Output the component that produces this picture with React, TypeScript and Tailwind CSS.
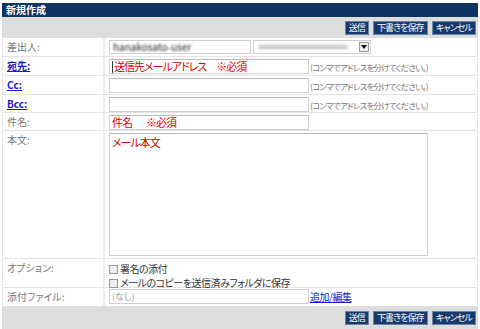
import React from "react";

const font = {
  fontFamily: '"Noto Sans CJK JP", "Noto Sans", sans-serif',
};

function Btn({ children }: { children: React.ReactNode }) {
  return (
    <button
      type="button"
      className="flex h-[14px] items-center border border-[#6d84a6] bg-[#163a6b] px-[3px] text-[9px] leading-none tracking-[-0.9px] text-white"
    >
      {children}
    </button>
  );
}

function Toolbar({ h }: { h: string }) {
  return (
    <div className={`flex items-center justify-end gap-[4px] bg-[#dddddd] pr-[2px] ${h}`}>
      <Btn>送信</Btn>
      <Btn>下書きを保存</Btn>
      <Btn>キャンセル</Btn>
    </div>
  );
}

function Row({
  label,
  link,
  h,
  children,
}: {
  label: string;
  link?: boolean;
  h: string;
  children?: React.ReactNode;
}) {
  return (
    <div className={`flex border-b border-[#e4e4e4] ${h}`}>
      <div className="w-[102px] shrink-0 border-r-2 border-[#ececec] pl-[4px] pt-[3px] text-[10px] leading-[12px]">
        {link ? (
          <a href="#" className="font-bold text-[#1a1acc] underline">
            {label}
          </a>
        ) : (
          <span className="text-[#777]">{label}</span>
        )}
      </div>
      <div className="flex min-w-0 flex-1 items-start pl-[4px] pt-[2px]">{children}</div>
    </div>
  );
}

function Note() {
  return (
    <span className="ml-[1px] pt-[2px] text-[8.5px] leading-[12px] tracking-[-0.8px] text-[#777]">
      (コンマでアドレスを分けてください。)
    </span>
  );
}

function Field({ children }: { children?: React.ReactNode }) {
  return (
    <div className="flex h-[15px] w-[200px] items-center border border-[#cfcfcf] border-t-[#b8b8b8] bg-white px-[2px] text-[11px] leading-none tracking-[-1px] text-[#dd0000]">
      {children}
    </div>
  );
}

export default function App() {
  return (
    <div
      className="h-[329px] w-[480px] overflow-hidden bg-white px-[2px] pt-[3px] [font-feature-settings:'palt']"
      style={font}
    >
      <div className="flex h-[14px] items-center bg-[#0e3562] pl-[4px] text-[10px] font-bold leading-none text-white">
        新規作成
      </div>
      <Toolbar h="h-[21px]" />
      <div className="border-x border-[#e4e4e4]">
        <Row label="差出人:" h="h-[19px]">
          <div className="flex h-[14px] w-[142px] items-center border border-[#cfcfcf] bg-white px-[3px]">
            <span className="text-[10px] leading-none text-[#222] blur-[0.8px]">hanakosato-user</span>
          </div>
          <div className="ml-[2px] flex h-[14px] w-[118px] items-center justify-between border border-[#cfcfcf] bg-white pl-[4px] pr-[1px]">
            <span className="h-[4px] w-[90px] rounded bg-[#c4c4c4] blur-[1.5px]" />
            <span className="flex h-[10px] w-[10px] items-center justify-center border border-[#999] bg-[#eee]">
              <svg width="6" height="4" viewBox="0 0 6 4">
                <path d="M0 0h6L3 4z" fill="#111" />
              </svg>
            </span>
          </div>
        </Row>
        <Row label="宛先:" link h="h-[19px]">
          <Field>
            <span className="mr-[1px] h-[12px] w-px bg-[#333]" />
            送信先メールアドレス
            <span className="w-[10px]" />
            ※必須
          </Field>
          <Note />
        </Row>
        <Row label="Cc:" link h="h-[19px]">
          <Field />
          <Note />
        </Row>
        <Row label="Bcc:" link h="h-[18px]">
          <Field />
          <Note />
        </Row>
        <Row label="件名:" h="h-[18px]">
          <Field>
            件名
            <span className="w-[14px]" />
            ※必須
          </Field>
        </Row>
        <Row label="本文:" h="h-[128px]">
          <div className="h-[123px] w-[319px] border border-[#cfcfcf] border-t-[#b8b8b8] bg-white px-[2px] pt-[3px] text-[11px] leading-none tracking-[-1px] text-[#dd0000]">
            メール本文
          </div>
        </Row>
        <Row label="オプション:" h="h-[29px]">
          <div className="flex flex-col gap-[2px] pt-[2px] text-[10px] leading-[12px] tracking-[-0.5px] text-[#333]">
            <label className="flex items-center gap-[2px]">
              <span className="h-[9px] w-[9px] border border-[#999] bg-[#eee]" />
              署名の添付
            </label>
            <label className="flex items-center gap-[2px]">
              <span className="h-[9px] w-[9px] border border-[#999] bg-[#eee]" />
              メールのコピーを送信済みフォルダに保存
            </label>
          </div>
        </Row>
        <div className="flex h-[18px]">
          <div className="w-[102px] shrink-0 border-r-2 border-[#ececec] pl-[4px] pt-[3px] text-[10px] leading-[12px] text-[#777]">
            添付ファイル:
          </div>
          <div className="flex flex-1 items-start pl-[4px] pt-[1px]">
            <div className="flex h-[15px] w-[200px] items-center border border-[#cfcfcf] bg-white px-[2px] text-[9px] leading-none text-[#999]">
              (なし)
            </div>
            <a href="#" className="ml-[1px] pt-[2px] text-[10px] leading-[12px] tracking-[-0.5px] text-[#1a1acc] underline">
              追加/編集
            </a>
          </div>
        </div>
      </div>
      <Toolbar h="h-[23px]" />
    </div>
  );
}
